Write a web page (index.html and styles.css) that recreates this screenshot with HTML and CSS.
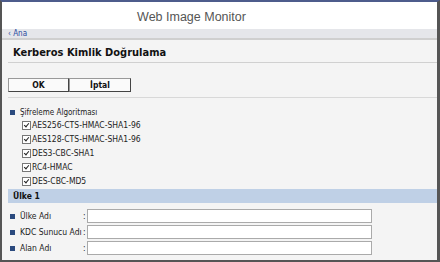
FILE: index.html
```html
<!DOCTYPE html>
<html>
<head>
<meta charset="utf-8">
<link rel="stylesheet" href="styles.css">
</head>
<body>
<div class="frame">
  <header class="top">Web Image Monitor</header>
  <nav class="crumb"><span class="arrow">‹</span> Ana</nav>
  <main class="content">
    <h1 class="title">Kerberos Kimlik Doğrulama</h1>
    <div class="buttons">
      <button class="btn">OK</button><button class="btn">İptal</button>
    </div>
    <section class="algo">
      <div class="label"><span class="sq"></span>Şifreleme Algoritması</div>
      <ul class="checks">
        <li><span class="cb"></span>AES256-CTS-HMAC-SHA1-96</li>
        <li><span class="cb"></span>AES128-CTS-HMAC-SHA1-96</li>
        <li><span class="cb"></span>DES3-CBC-SHA1</li>
        <li><span class="cb"></span>RC4-HMAC</li>
        <li><span class="cb"></span>DES-CBC-MD5</li>
      </ul>
    </section>
    <div class="bar">Ülke 1</div>
    <div class="form">
      <div class="row"><span class="sq"></span><span class="name">Ülke Adı</span><span class="colon">:</span><span class="input"></span></div>
      <div class="row"><span class="sq"></span><span class="name">KDC Sunucu Adı</span><span class="colon">:</span><span class="input"></span></div>
      <div class="row"><span class="sq"></span><span class="name">Alan Adı</span><span class="colon">:</span><span class="input"></span></div>
    </div>
  </main>
</div>
</body>
</html>
```
FILE: styles.css
```css
html, body { margin: 0; padding: 0; }
body { width: 440px; height: 262px; overflow: hidden; background: #fff; font-family: "DejaVu Sans Condensed", "DejaVu Sans", Verdana, sans-serif; color: #222; }
.frame {
  box-sizing: border-box; width: 440px; height: 262px;
  border-top: 2px solid #4d5c8c; border-left: 2px solid #555; border-right: 3px solid #555; border-bottom: 2px solid #555;
  display: flex; flex-direction: column; background: #f4f4f4;
}
.top { height: 27px; background: #fff; font-family: "Liberation Sans", Arial, sans-serif; font-size: 12.5px; color: #555; display: flex; align-items: center; justify-content: center; padding-right: 56px; padding-top: 2px; box-sizing: border-box; }
.crumb { height: 9px; background: #e5e6ea; font-size: 8px; line-height: 9px; color: #2a4aa0; padding-left: 6px; border-bottom: 2px solid #cfcfcf; }
.crumb .arrow { font-size: 8px; }
.content { flex: 1; padding: 0 0 0 6px; display: flex; flex-direction: column; }
.title { margin: 0; font-size: 11px; font-weight: bold; color: #111; padding: 6px 0 0 5px; height: 16px; border-bottom: 1px solid #d0d0d0; }
.buttons { display: flex; padding: 15px 0 0 0; height: 19px; border-bottom: 1px solid #d8d8d8; }
.btn { box-sizing: border-box; height: 14px; font-family: "DejaVu Sans Condensed", "DejaVu Sans", sans-serif; font-size: 8.5px; font-weight: bold; background: #fafafa; border: 1px solid #666; border-color: #999 #444 #444 #999; padding: 0; color: #111; }
.btn:first-child { width: 61px; }
.btn:last-child { width: 62px; }
.algo { padding: 8px 0 0 2px; height: 83px; }
.label { font-size: 8px; display: flex; align-items: center; height: 12px; }
.sq { display: inline-block; width: 5px; height: 5px; background: #2b4a7e; margin-right: 5px; }
.checks { list-style: none; margin: 0; padding: 0 0 0 12px; }
.checks li { font-size: 8.5px; height: 14px; display: flex; align-items: center; }
.cb { width: 7px; height: 7px; border: 1px solid #777; background: #fff; margin-right: 1px; position: relative; }
.cb::after { content: ""; position: absolute; left: 2px; top: 0px; width: 2px; height: 4px; border: solid #222; border-width: 0 1.5px 1.5px 0; transform: rotate(40deg); }
.bar { background: #bfd0e6; height: 14px; font-size: 8.5px; font-weight: bold; color: #111; padding-left: 5px; display: flex; align-items: center; margin-right: 0; }
.form { padding: 5px 0 0 2px; }
.row { display: flex; align-items: center; height: 16px; font-size: 8.5px; }
.row .name { width: 63px; }
.row .colon { width: 4px; }
.input { width: 283px; height: 12px; background: #fff; border: 1px solid #aaa; }
```
